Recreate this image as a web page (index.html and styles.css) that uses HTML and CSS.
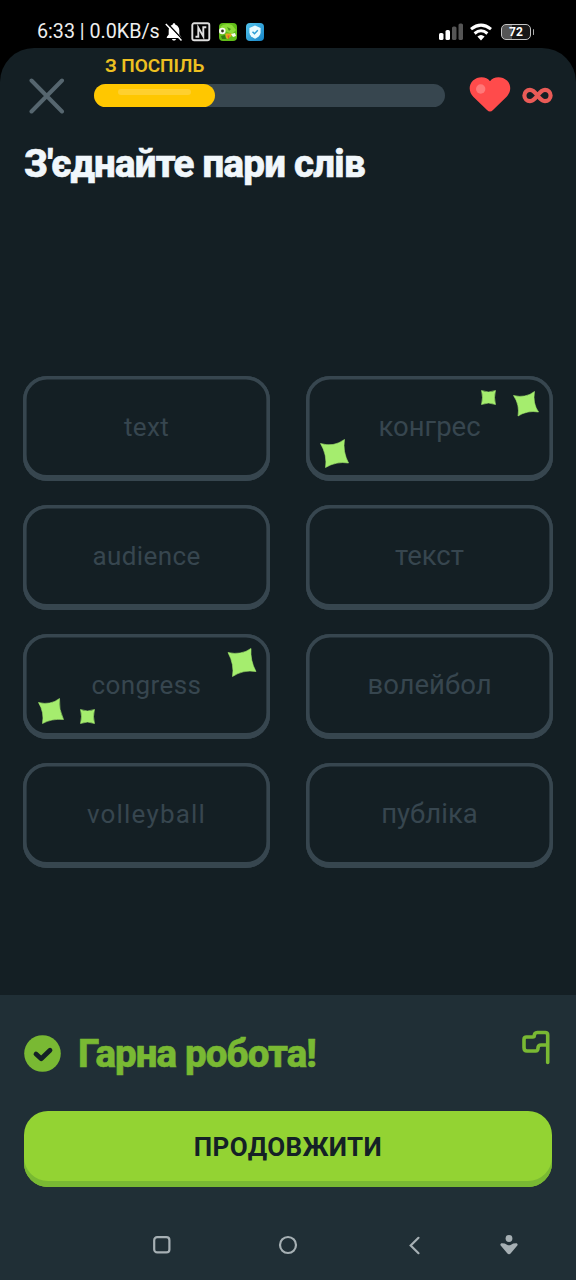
FILE: index.html
```html
<!DOCTYPE html>
<html lang="uk">
<head>
<meta charset="utf-8">
<title>З'єднайте пари слів</title>
<link rel="stylesheet" href="styles.css">
</head>
<body>
<div class="phone">
  <div class="status">
    <span class="clock">6:33 | 0.0KB/s</span>
    <svg class="bell" width="18" height="20" viewBox="0 0 18 20"><path d="M9 1.2c-.9 0-1.4.6-1.4 1.5C5 3.500 3.700 5.700 3.700 8.300v4.300L1.800 15v1h14.400v-1l-1.900-2.400V8.300c0-2.600-1.300-4.800-3.900-5.600 0-.9-.5-1.500-1.400-1.500zM7 17c.3 1 1 1.600 2 1.600s1.700-.6 2-1.600z" fill="#fff"/><path d="M2.300 1.300 18 18" stroke="#000" stroke-width="1.500"/><path d="M.8 2 16.500 18.500" stroke="#fff" stroke-width="1.500"/></svg>
    <svg class="nfc" width="20" height="20" viewBox="0 0 20 20" fill="none" stroke="#dedede"><rect x="1.300" y="1.300" width="17" height="17" rx="1.800" stroke-width="1.900"/><path d="M4.500 14.700h2.800V5.600l5 8.800V5.300h3" stroke-width="1.900"/></svg>
    <svg class="owl" width="18" height="18" viewBox="0 0 18 18"><rect width="18" height="18" rx="4" fill="#62bd19"/><path d="M1 4Q6-1 13 2l4 5-4 4-7-3z" fill="#8cdb38"/><path d="m8 4 4 2-2 2z" fill="#429414"/><circle cx="3.300" cy="8" r="3.300" fill="#f7f8ed"/><circle cx="3.500" cy="8" r="1.400" fill="#303b1b"/><path d="M6.500 10.500h6v2.500l-4 3-2-2z" fill="#e9a51c"/><path d="M8.500 12.500h2l-1 4z" fill="#d95735"/><path d="m12 11 4-1 1 3-3 1z" fill="#f7f8ed"/><path d="m2 13 4-1 1 4H3z" fill="#347e12"/></svg>
    <svg class="shield" width="18" height="18" viewBox="0 0 18 18"><defs><linearGradient id="sky" x2="1" y2="1"><stop stop-color="#54c5ed"/><stop offset="1" stop-color="#1684c7"/></linearGradient></defs><rect width="18" height="18" rx="4" fill="url(#sky)"/><path d="M9 2.500 14.600 5v4.300c0 3-2.600 5.200-5.600 6.500-3-1.300-5.600-3.500-5.600-6.500V5z" fill="#e8fbff"/><path d="m6.500 8.700 2 2 3.300-3.400" stroke="#299dd5" stroke-width="1.500" fill="none"/></svg>
    <svg class="signal" width="24" height="18" viewBox="0 0 24 18"><rect y="10" width="4.500" height="7" rx="1.600" fill="#fff"/><rect x="6.500" y="7" width="4.500" height="10" rx="1.600" fill="#fff"/><rect x="13" y="3.500" width="4.500" height="13.500" rx="1.600" fill="#555"/><rect x="19.500" y=".5" width="4.500" height="16.500" rx="1.600" fill="#555"/></svg>
    <svg class="wifi" width="22" height="18" viewBox="0 0 22 18" fill="none" stroke="#fff" stroke-width="3"><path d="M1 6.200Q11-2 21 6.200"/><path d="M4.600 10.500Q11 5 17.400 10.500"/><path d="m7.400 13.500 3.600 4 3.600-4q-3.600-3-7.200 0z" fill="#fff" stroke="none"/></svg>
    <div class="battery"><span>72</span></div>
  </div>
  <main class="app">
    <div class="top">
      <svg class="close" width="36" height="36" viewBox="0 0 36 36" stroke="#56666f" stroke-width="4" stroke-linecap="round"><path d="M2.500 2.500 33 33.500M33 2.500 2.500 33.500"/></svg>
      <div class="progress">
        <div class="streak">З ПОСПІЛЬ</div>
        <div class="track"><div class="fill"><div class="shine"></div></div></div>
      </div>
      <svg class="heart" width="42" height="35" viewBox="0 0 42 35"><path d="M21 4.300C24-.7 33-1.500 38 3.600c5 5 3.700 12-.6 16.500L24 33q-3 3-6 0L4.500 20C0 15.500-1 8.500 4 3.600 9-1.500 18-.7 21 4.300z" fill="#ff4b4b"/><circle cx="11.700" cy="12" r="4.700" fill="#ff7878"/></svg>
      <svg class="infinity" width="31" height="17" viewBox="0 0 31 17" fill="none" stroke="#ea5b57" stroke-width="4.200"><path d="M15.500 8.500C12.500 4.500 10.500 2.900 8 2.900a5.600 5.600 0 0 0 0 11.200c2.500 0 4.500-1.600 7.500-5.600s5-5.600 7.500-5.600a5.600 5.600 0 0 1 0 11.200c-2.500 0-4.500-1.600-7.500-5.600z"/></svg>
    </div>
    <h1 class="title">З'єднайте пари слів</h1>
    <div class="grid">
      <div class="card"><span class="latin short">text</span></div>
      <div class="card"><span>конгрес</span>
        <svg class="sparks" viewBox="0 0 247 105"><path d="M175.500 14.500q7 3 14 0-2 7 0 14-7-3-14 0 2-7 0-14zM207.500 19.500q12 3 21-4-2 12 4 20.500-11-2-20.500 4 2-11-4.500-20.500zM14.500 67.500q13 4 24-4-2 12 4 23.500-12-2-23 4.500 2-12-5-24z"/></svg></div>
      <div class="card"><span class="latin">audience</span></div>
      <div class="card"><span>текст</span></div>
      <div class="card"><span class="latin">congress</span>
        <svg class="sparks" viewBox="0 0 247 105"><path d="M205 18.500q13 3 23-4-1 12 5 23-13-2-23.500 5 2-12-4.500-24zM15.500 68.500q12 3 21-4-1 11 4 21-12-1-21 4 2-11-4-21zM57.500 75.500q7 3 14 0-2 7 0 14-7-3-14 0 2-7 0-14z"/></svg></div>
      <div class="card"><span>волейбол</span></div>
      <div class="card"><span class="latin long">volleyball</span></div>
      <div class="card"><span>публіка</span></div>
    </div>
  </main>
  <footer class="result">
    <div class="praise">
      <svg class="check" width="37" height="37" viewBox="0 0 37 37"><circle cx="18.500" cy="18.500" r="18.300" fill="#79b933"/><path d="m12 19 5.200 4.700 8.800-8.500" stroke="#142126" stroke-width="4.800" stroke-linecap="round" stroke-linejoin="round" fill="none"/></svg>
      <span class="praise-text">Гарна робота!</span>
      <svg class="flag" width="30" height="36" viewBox="0 0 30 36" fill="none" stroke="#79b933" stroke-width="3.600" stroke-linecap="round" stroke-linejoin="round"><path d="M26.700 32.500V5q0-2.500-2.500-2.500h-8q-3 0-3 3.500 0 1-1.500 1H5.500Q3 7 3 9.500v8Q3 21 6 21h8.500q2.500 0 2.500-3t3-3h6.700"/></svg>
    </div>
    <button class="next"><span>ПРОДОВЖИТИ</span></button>
    <nav class="nav">
      <svg width="18" height="18" viewBox="0 0 18 18"><rect x="1.200" y="1.200" width="15.200" height="15.200" rx="3" fill="none" stroke="#a6b0b4" stroke-width="2.200"/></svg>
      <svg class="home" width="20" height="20" viewBox="0 0 20 20"><circle cx="10" cy="10" r="8" fill="none" stroke="#a6b0b4" stroke-width="2.200"/></svg>
      <svg class="back" width="12" height="20" viewBox="0 0 12 20"><path d="m9.500 2.800-7.800 7.700 7.800 7.700" fill="none" stroke="#a6b0b4" stroke-width="2.200" stroke-linecap="round"/></svg>
      <svg class="drop" width="18" height="20" viewBox="0 0 18 20" fill="#a6b0b4"><circle cx="9" cy="3.500" r="3.400"/><path d="M2 8.300q3 0 5 1.400 2 1 4 0 2-1.400 5-1.400c1.500 0 2 1.300 1.300 2.300L11 18q-2 2.500-4 0L.7 10.600C0 9.600.5 8.300 2 8.300z"/></svg>
    </nav>
  </footer>
</div>
</body>
</html>
```
FILE: styles.css
```css
* { box-sizing: border-box; }
body { margin: 0; background: #000; font-family: Roboto, "Noto Sans", sans-serif; }
svg { display: block; flex: none; }
.phone { width: 576px; height: 1280px; display: flex; flex-direction: column; overflow: hidden; }

.status { height: 48px; padding: 15px 45px 0 37px; display: flex; align-items: center; color: #eee; }
.clock { width: 128px; font-size: 19.700px; line-height: 24px; white-space: nowrap; }
.nfc { margin-left: 8px; }
.owl { margin-left: 8px; }
.shield { margin-left: 9px; }
.signal { margin-left: auto; }
.wifi { margin-left: 7px; }
.battery { position: relative; margin-left: 9px; width: 30px; height: 16px; border: 1.500px solid #c5c5c5; border-radius: 5px; background: linear-gradient(90deg, #555 35%, #171717 35%); font-size: 12px; font-weight: 700; line-height: 14px; text-align: center; color: #fff; }
.battery::after { content: ""; position: absolute; right: -4px; top: 4px; width: 1.500px; height: 6px; background: #aaa; border-radius: 1px; }

.app { height: 947px; background: #141f24; border-radius: 34px 34px 0 0; padding: 0 23px; display: flex; flex-direction: column; }
.top { height: 70px; display: flex; align-items: flex-start; }
.close { margin: 30px 0 0 6px; }
.progress { margin-left: 29px; width: 352px; padding-top: 7px; }
.streak { height: 29px; padding-left: 11px; color: #edc021; font-size: 19px; font-weight: 600; line-height: 22px; letter-spacing: -.05px; white-space: nowrap; }
.track { height: 23px; border-radius: 12px; background: #37464f; }
.fill { width: 120.500px; height: 23px; border-radius: 12px; background: #ffc700; padding: 5px 24px; }
.shine { height: 6px; border-radius: 3px; background: #ffd02e; }
.heart { margin: 29px 0 0 24px; }
.infinity { margin: 39px 0 0 11px; }
.title { margin: 24px 0 0 1px; height: 44px; font-size: 38.500px; font-weight: 800; line-height: 44px; letter-spacing: -.75px; color: #f1f7fb; -webkit-text-stroke: .6px #f1f7fb; white-space: nowrap; }

.grid { margin-top: 190px; display: grid; grid-template-columns: 247px 247px; justify-content: space-between; grid-auto-rows: 105px; row-gap: 24px; }
.card { position: relative; border-radius: 24px; box-shadow: inset 0 0 0 3.400px #37464f, inset 0 -2.600px 0 3.400px #37464f; display: flex; align-items: center; justify-content: center; padding-bottom: 3px; color: #37464f; font-size: 27.500px; line-height: 32px; white-space: nowrap; }
.latin { font-size: 26px; letter-spacing: .4px; }
.short { letter-spacing: .3px; }
.long { letter-spacing: 1.200px; }
.sparks { position: absolute; left: 0; top: 0; width: 247px; height: 105px; fill: #a5ed6e; stroke: #a5ed6e; stroke-width: .6px; stroke-linejoin: round; }

.result { height: 285px; background: #202f36; padding: 0 24px; display: flex; flex-direction: column; }
.praise { height: 116px; display: flex; align-items: center; }
.praise-text { margin: 2px 0 0 17px; font-size: 38.500px; font-weight: 800; line-height: 44px; letter-spacing: -.9px; color: #79b933; -webkit-text-stroke: .6px #79b933; white-space: nowrap; }
.flag { margin: -10px 1px 0 auto; }
.next { height: 76px; flex: none; border: 0; border-radius: 24px; background: #93d333; box-shadow: inset 0 -6px #79b933; padding: 0 0 5px; color: #142126; font: 700 26px/32px Roboto, "Noto Sans", sans-serif; letter-spacing: .4px; }
.nav { margin: 48px 0 0 129px; height: 20px; display: flex; align-items: center; }
.home { margin-left: 107px; }
.back { margin-left: 111px; }
.drop { margin-left: 79px; }
```
